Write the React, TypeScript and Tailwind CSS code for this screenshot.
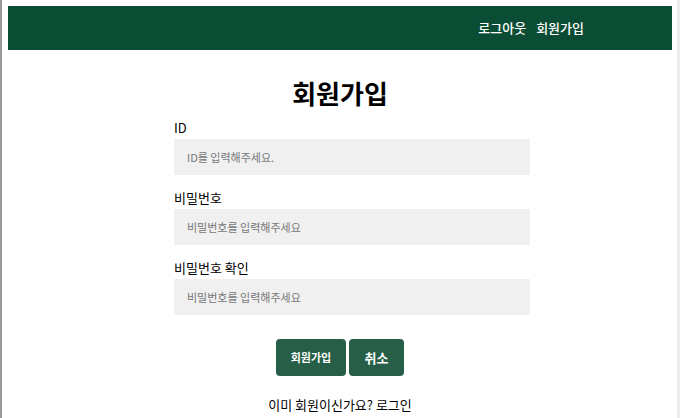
export default function App() {
  return (
    <div
      className="flex h-[418px] w-[680px] bg-white text-black"
      style={{ fontFamily: '"Noto Sans CJK KR", "Noto Sans", sans-serif' }}
    >
      <div className="w-[2px] bg-[#9a9a9a]" />
      <div className="flex-1 pl-[6px] pr-[5px] pt-[6px]">
        {/* Header */}
        <header className="flex h-[44px] items-center justify-end gap-[10px] bg-[#0b4d34] pr-[88px] text-[13px] font-medium text-white">
          <a href="#">로그아웃</a>
          <a href="#">회원가입</a>
        </header>

        {/* Signup form */}
        <main className="flex flex-col items-center pt-[25px]">
          <h1 className="text-[26px] font-bold leading-[36px]">회원가입</h1>
          <form className="mt-[8px] w-[332px]">
            <label className="block text-[13px] leading-[18px]">ID</label>
            <input
              type="text"
              placeholder="ID를 입력해주세요."
              className="mt-[2px] h-[36px] w-[356px] bg-[#f0f0f0] px-[13px] text-[11px] outline-none placeholder:text-[#777]"
            />
            <label className="mt-[14px] block text-[13px] leading-[18px]">비밀번호</label>
            <input
              type="password"
              placeholder="비밀번호를 입력해주세요"
              className="mt-[2px] h-[36px] w-[356px] bg-[#f0f0f0] px-[13px] text-[11px] outline-none placeholder:text-[#777]"
            />
            <label className="mt-[14px] block text-[13px] leading-[18px]">비밀번호 확인</label>
            <input
              type="password"
              placeholder="비밀번호를 입력해주세요"
              className="mt-[2px] h-[36px] w-[356px] bg-[#f0f0f0] px-[13px] text-[11px] outline-none placeholder:text-[#777]"
            />
          </form>
          <div className="mt-[24px] flex gap-[3px]">
            <button className="h-[37px] w-[70px] rounded-[4px] bg-[#275e47] text-[11px] font-bold text-white">
              회원가입
            </button>
            <button className="h-[37px] w-[55px] rounded-[4px] bg-[#275e47] text-[13px] font-bold text-white">
              취소
            </button>
          </div>
          <p className="mt-[20px] text-[13px] leading-[18px]">이미 회원이신가요? 로그인</p>
        </main>
      </div>
      <div className="w-[3px] bg-[#ececec]" />
    </div>
  );
}
